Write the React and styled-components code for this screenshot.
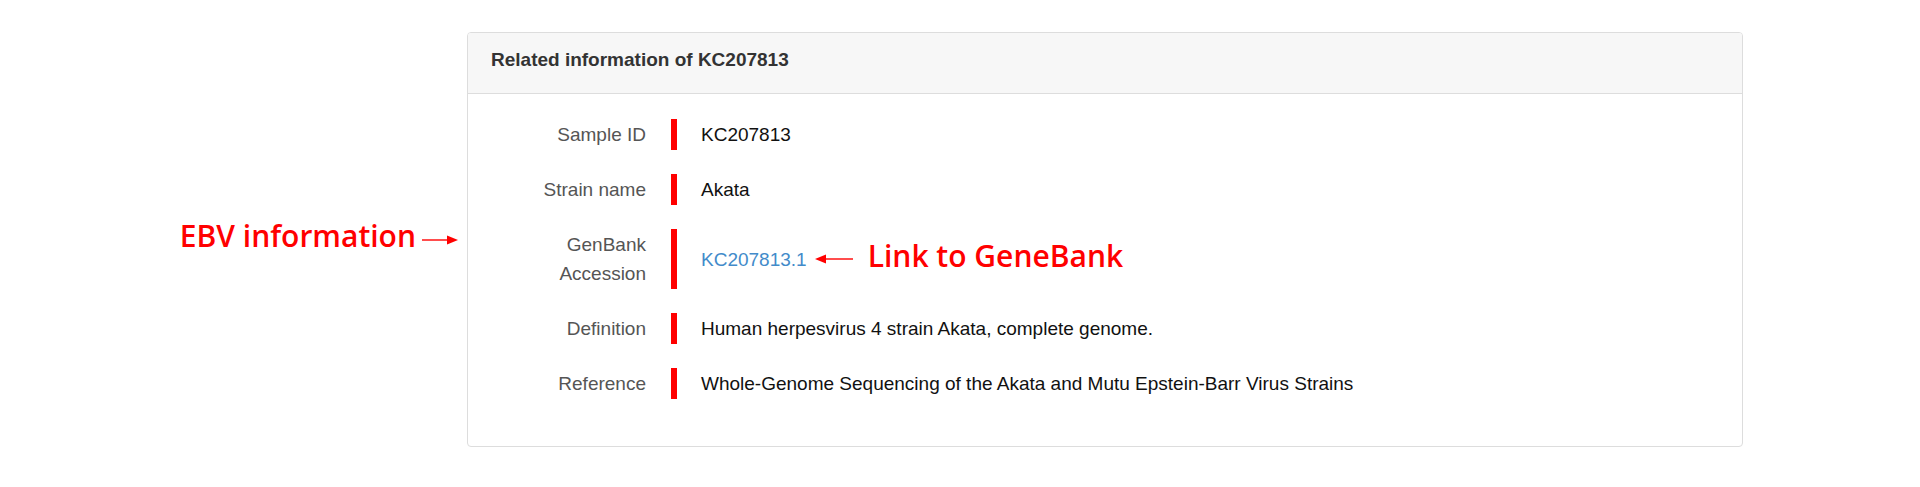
import React from "react";
import styled, { createGlobalStyle } from "styled-components";

const GlobalStyle = createGlobalStyle`
  html, body {
    margin: 0;
    padding: 0;
    background: #fff;
  }
  body {
    font-family: "Liberation Sans", Arial, sans-serif;
  }
`;

const Page = styled.div`
  display: flex;
  align-items: center;
  height: 487px;
  box-sizing: border-box;
  padding-top: 32px;
  padding-bottom: 40px;
`;

const SideNote = styled.div`
  width: 467px;
  flex: none;
  display: flex;
  align-items: center;
  justify-content: flex-end;
  padding-right: 9px;
  box-sizing: border-box;
`;

const NoteText = styled.span`
  font-family: "Open Sans", "Noto Sans", sans-serif;
  font-weight: 600;
  font-size: 30px;
  line-height: 1;
  color: #ff0000;
  white-space: nowrap;
  margin-bottom: ${(p) => p.$lift || 0}px;
`;

const Panel = styled.section`
  width: 1276px;
  flex: none;
  box-sizing: border-box;
  border: 1px solid #dddddd;
  border-radius: 4px;
  background: #fff;
  overflow: hidden;
`;

const PanelHeading = styled.header`
  height: 61px;
  box-sizing: border-box;
  padding: 16px 23px 0;
  background: #f7f7f7;
  border-bottom: 1px solid #dddddd;
  font-size: 19px;
  font-weight: 700;
  line-height: 21px;
  color: #333;
`;

const PanelBody = styled.div`
  padding: 25px 23px 47px;
  display: flex;
  flex-direction: column;
  gap: 24px;
`;

const Row = styled.div`
  display: flex;
  align-items: stretch;
`;

const Label = styled.div`
  width: 155px;
  margin-right: 25px;
  padding: 1px 0;
  text-align: right;
  font-size: 19px;
  line-height: 29px;
  color: #555;
`;

const Value = styled.div`
  display: flex;
  align-items: center;
  border-left: 6px solid #ff0000;
  padding-left: 24px;
  font-size: 19px;
  line-height: 29px;
  color: #111;
`;

const Link = styled.a`
  color: #428bca;
  text-decoration: none;
`;

const Arrow = styled.svg`
  flex: none;
  display: block;
  margin: ${(p) => p.$margin || "0"};
`;

const ArrowRight = () => (
  <Arrow width="36" height="10" viewBox="0 0 36 10" $margin="0 0 0 6px">
    <line x1="0" y1="5" x2="27" y2="5" stroke="#ff0000" strokeWidth="1.4" />
    <polygon points="36,5 25,0.5 25,9.5" fill="#ff0000" />
  </Arrow>
);

const ArrowLeft = () => (
  <Arrow width="38" height="10" viewBox="0 0 38 10" $margin="0 15px 0 8px">
    <line x1="9" y1="5" x2="38" y2="5" stroke="#ff0000" strokeWidth="1.4" />
    <polygon points="0,5 11,0.5 11,9.5" fill="#ff0000" />
  </Arrow>
);

const rows = [
  { label: "Sample ID", value: "KC207813" },
  { label: "Strain name", value: "Akata" },
  { label: ["GenBank", "Accession"], value: "KC207813.1", link: true },
  { label: "Definition", value: "Human herpesvirus 4 strain Akata, complete genome." },
  {
    label: "Reference",
    value: "Whole-Genome Sequencing of the Akata and Mutu Epstein-Barr Virus Strains",
  },
];

export default function App() {
  return (
    <>
      <GlobalStyle />
      <Page>
        <SideNote>
          <NoteText $lift={8}>EBV information</NoteText>
          <ArrowRight />
        </SideNote>
        <Panel>
          <PanelHeading>Related information of KC207813</PanelHeading>
          <PanelBody>
            {rows.map((r, i) => (
              <Row key={i}>
                <Label>
                  {Array.isArray(r.label)
                    ? r.label.map((l) => <div key={l}>{l}</div>)
                    : r.label}
                </Label>
                <Value>
                  {r.link ? (
                    <>
                      <Link href="#">{r.value}</Link>
                      <ArrowLeft />
                      <NoteText $lift={6}>Link to GeneBank</NoteText>
                    </>
                  ) : (
                    r.value
                  )}
                </Value>
              </Row>
            ))}
          </PanelBody>
        </Panel>
      </Page>
    </>
  );
}
